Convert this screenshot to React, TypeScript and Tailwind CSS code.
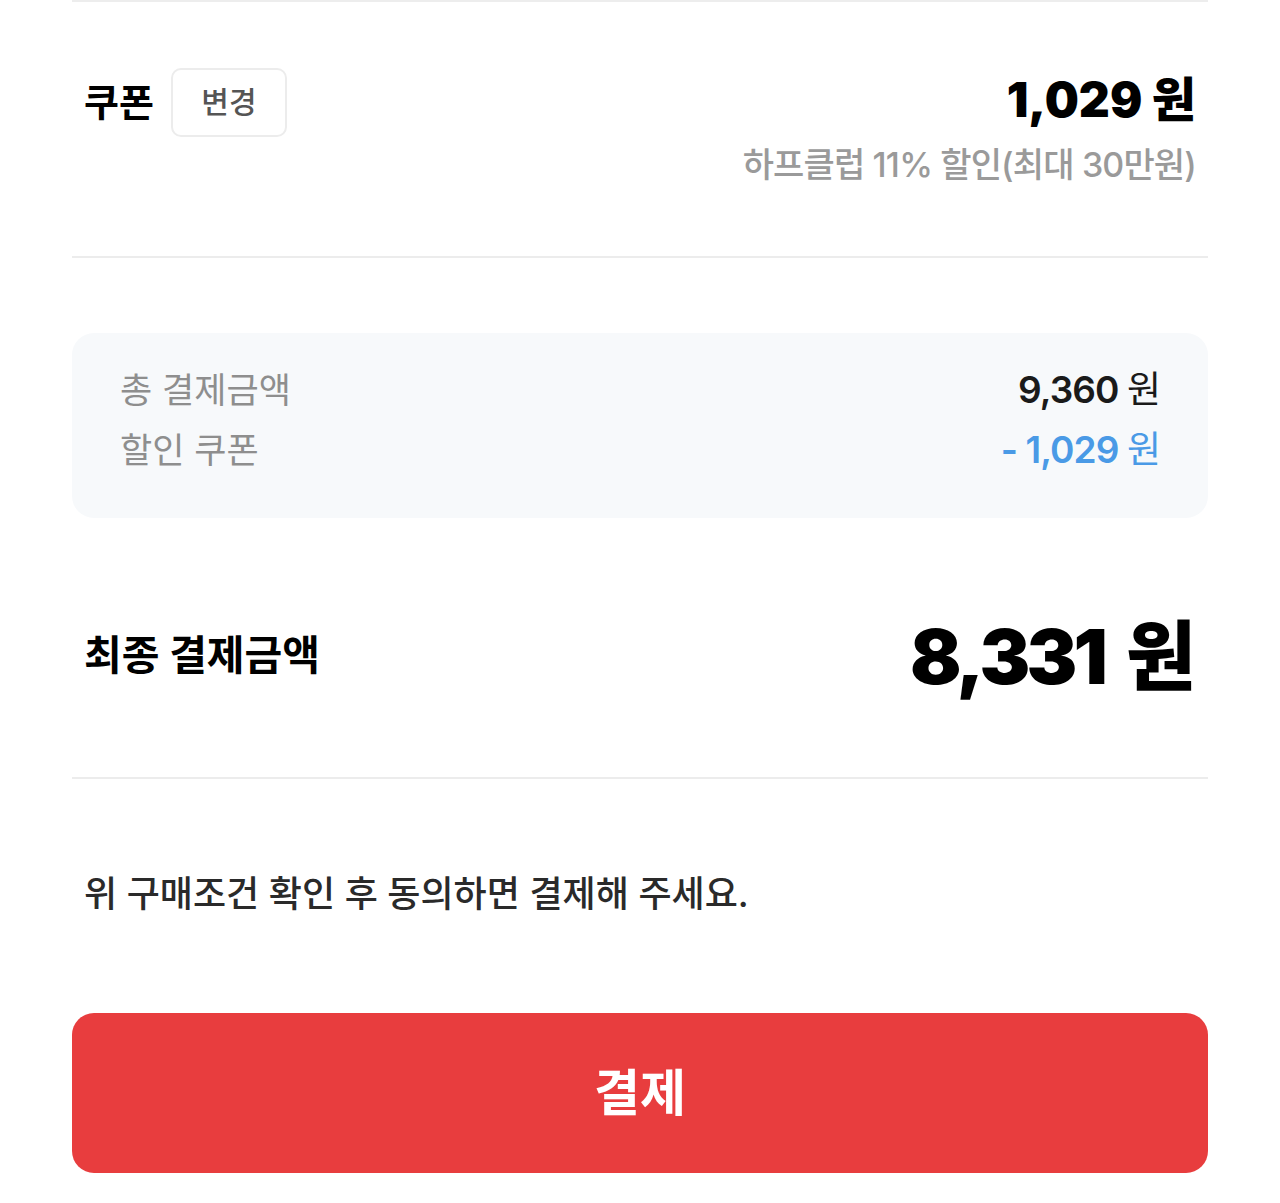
export default function App() {
  return (
    <div
      className="min-h-[1203px] bg-white px-[72px]"
      style={{ fontFamily: 'Inter, "Noto Sans CJK KR", sans-serif' }}
    >
      <div className="h-[2px] bg-[#ededed]" />

      {/* coupon */}
      <div className="flex items-start justify-between px-3 pt-[66px] pb-[66px]">
        <div className="flex items-center gap-[17px]">
          <span className="text-[38px] font-bold text-black">쿠폰</span>
          <button className="h-[69px] w-[116px] rounded-[10px] border-2 border-[#ececec] bg-white text-[30px] font-medium text-[#555]">
            변경
          </button>
        </div>
        <div className="flex flex-col items-end">
          <span className="mt-[4px] text-[48px] leading-[56px] font-black text-black">
            1,029 원
          </span>
          <span className="mt-[12px] text-[34px] leading-[50px] font-medium tracking-tight text-[#9a9a9a]">
            하프클럽 11% 할인(최대 30만원)
          </span>
        </div>
      </div>

      <div className="h-[2px] bg-[#ececec]" />

      {/* summary box */}
      <div className="mt-[75px] flex flex-col gap-[12px] rounded-[22px] bg-[#f7f9fb] px-[48px] pt-[33px] pb-[44px]">
        <div className="flex items-center justify-between">
          <span className="text-[35px] leading-[48px] text-[#8e8e8e]">총 결제금액</span>
          <span className="text-[37px] leading-[48px] font-semibold tracking-tight text-[#1a1a1a]">
            9,360 <span className="font-normal">원</span>
          </span>
        </div>
        <div className="flex items-center justify-between">
          <span className="text-[35px] leading-[48px] text-[#8e8e8e]">할인 쿠폰</span>
          <span className="text-[37px] leading-[48px] font-semibold tracking-tight text-[#4a9ae6]">
            - 1,029 <span className="font-normal">원</span>
          </span>
        </div>
      </div>

      {/* final */}
      <div className="mt-[92px] flex items-center justify-between px-3 pb-[75px]">
        <span className="text-[41px] font-bold text-black">최종 결제금액</span>
        <span className="flex items-baseline text-[76px] leading-[92px] font-black text-black">
          <span className="tracking-tighter">8,331</span>
          <span className="ml-[22px]">원</span>
        </span>
      </div>

      <div className="h-[2px] bg-[#ececec]" />

      <p className="mt-[90px] px-3 text-[36px] leading-[50px] font-medium text-[#2a2a2a]">
        위 구매조건 확인 후 동의하면 결제해 주세요.
      </p>

      <button className="mt-[94px] flex h-[160px] w-full items-center justify-center rounded-[22px] bg-[#e83d3e] text-[50px] font-bold text-white">
        결제
      </button>
    </div>
  )
}
